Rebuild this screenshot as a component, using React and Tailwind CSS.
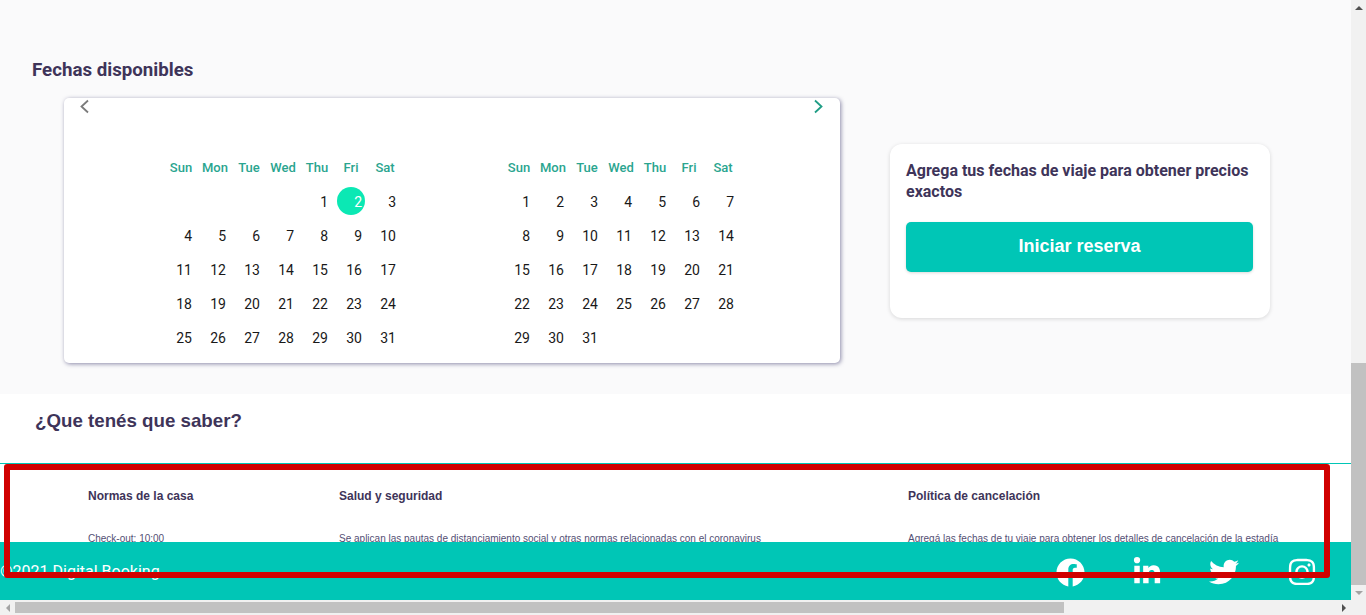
import React from 'react';
import { FaFacebook, FaLinkedinIn, FaTwitter, FaInstagram } from 'react-icons/fa';

const dayNames = ['Sun', 'Mon', 'Tue', 'Wed', 'Thu', 'Fri', 'Sat'];

const range = (from, to) => Array.from({ length: to - from + 1 }, (_, i) => from + i);

const Month = ({ blanks, total, selected }) => (
    <div className="grid grid-cols-[repeat(7,34px)] w-[238px]">
        {dayNames.map((name) => (
            <div key={name} className="h-[34px] flex items-center justify-center text-[13px] font-medium text-[#2aa58f]">
                {name}
            </div>
        ))}
        {range(1, blanks).map((n) => <div key={`b${n}`} className="h-[34px]" />)}
        {range(1, total).map((day) => (
            <div key={day} className="relative h-[34px] flex items-center justify-end pr-[6px] text-[14px] text-[#191919]">
                {day === selected && (
                    <span className="absolute left-[3px] top-[2px] w-[28px] h-[28px] rounded-full bg-[#0be8b4]" />
                )}
                <span className={day === selected ? 'relative text-white' : 'relative'}>{day}</span>
            </div>
        ))}
    </div>
);

const infoColumns = [
    { title: 'Normas de la casa', text: 'Check-out: 10:00', width: 'w-[251px]' },
    { title: 'Salud y seguridad', text: 'Se aplican las pautas de distanciamiento social y otras normas relacionadas con el coronavirus', width: 'w-[569px]' },
    { title: 'Política de cancelación', text: 'Agregá las fechas de tu viaje para obtener los detalles de cancelación de la estadía', width: 'w-[400px]' },
];

export default function App() {
    return (
        <div className="relative flex flex-col w-[1366px] h-[615px] overflow-hidden bg-white font-['Roboto',sans-serif]">
            <div className="flex h-[600px]">
                <main className="flex flex-col w-[1351px]">
                    {/* Fechas disponibles */}
                    <section className="h-[394px] bg-[#fafafb] pl-[32px] pt-[58px]">
                        <h2 className="text-[18.72px] leading-[24px] font-bold text-[#3e3459]">Fechas disponibles</h2>
                        <div className="flex mt-[16px] ml-[32px]">
                            <div className="w-[776px] h-[265px] bg-white rounded-[5px] shadow-[1px_1px_4px_rgba(50,45,100,0.55)] flex flex-col">
                                <div className="flex justify-between pl-[14px] pr-[15px] pt-[1px] h-[52px]">
                                    <svg width="13" height="15" viewBox="0 0 13 15" fill="none" stroke="#7b7b7b" strokeWidth="1.8">
                                        <path d="M10 1.5 L3.5 7.5 L10 13.5" />
                                    </svg>
                                    <svg width="13" height="15" viewBox="0 0 13 15" fill="none" stroke="#1f9d85" strokeWidth="1.8">
                                        <path d="M3 1.5 L9.5 7.5 L3 13.5" />
                                    </svg>
                                </div>
                                <div className="flex gap-[100px] pl-[100px] pt-[1px]">
                                    <Month blanks={4} total={31} selected={2} />
                                    <Month blanks={0} total={31} />
                                </div>
                            </div>
                            <div className="w-[380px] h-[174px] mt-[46px] ml-[50px] bg-white rounded-[12px] shadow-[0_1px_4px_rgba(0,0,0,0.14)] pl-[16px] pr-[17px] pt-[16px]">
                                <p className="text-[16px] leading-[21px] font-bold text-[#3e3459]">
                                    Agrega tus fechas de viaje para obtener precios exactos
                                </p>
                                <button className="w-full h-[50px] mt-[20px] pb-[2px] rounded-[5px] bg-[#00c6b6] text-white text-[18px] font-bold font-['Liberation_Sans',sans-serif] shadow-[0_1px_3px_rgba(0,0,0,0.15)]">
                                    Iniciar reserva
                                </button>
                            </div>
                        </div>
                    </section>

                    {/* Que tenes que saber */}
                    <section className="h-[69px] bg-white pl-[35px] pt-[15px]">
                        <h2 className="text-[18.72px] leading-[24px] font-bold text-[#3e3459] font-['Liberation_Sans',sans-serif]">¿Que tenés que saber?</h2>
                    </section>
                    <div className="h-px bg-[#00c6b6]" />
                    <section className="flex h-[78px] overflow-hidden bg-white pl-[88px] pt-[25px] font-['Liberation_Sans',sans-serif]">
                        {infoColumns.map((col) => (
                            <div key={col.title} className={col.width}>
                                <h3 className="text-[12px] leading-[15px] font-bold text-[#3e3459]">{col.title}</h3>
                                <p className="mt-[28px] text-[10px] leading-[13px] text-[#544f74]">{col.text}</p>
                            </div>
                        ))}
                    </section>

                    {/* Footer */}
                    <footer className="flex items-center justify-between h-[58px] pt-[2px] bg-[#00c6b6] text-white pr-[34px]">
                        <span className="text-[16px]">©2021 Digital Booking</span>
                        <div className="flex items-center">
                            <FaFacebook size={29} />
                            <FaLinkedinIn size={30} className="ml-[47px]" />
                            <FaTwitter size={30} className="ml-[47px]" />
                            <FaInstagram size={30} className="ml-[48px]" />
                        </div>
                    </footer>
                </main>

                {/* vertical scrollbar */}
                <div className="flex flex-col w-[15px] bg-[#f1f1f1]">
                    <div className="flex justify-center items-center h-[15px]">
                        <div className="w-0 h-0 border-l-[4px] border-r-[4px] border-b-[4px] border-l-transparent border-r-transparent border-b-[#505050]" />
                    </div>
                    <div className="mt-auto h-[222px] bg-[#c1c1c1]" />
                    <div className="flex justify-center items-center h-[15px]">
                        <div className="w-0 h-0 border-l-[4px] border-r-[4px] border-t-[4px] border-l-transparent border-r-transparent border-t-[#a3a3a3]" />
                    </div>
                </div>
            </div>

            {/* horizontal scrollbar */}
            <div className="flex items-center h-[15px] bg-[#f1f1f1]">
                <div className="flex justify-center w-[15px]">
                    <div className="w-0 h-0 border-t-[4px] border-b-[4px] border-r-[4px] border-t-transparent border-b-transparent border-r-[#a3a3a3]" />
                </div>
                <div className="w-[1049px] h-[11px] bg-[#c1c1c1]" />
                <div className="flex justify-center w-[15px] ml-auto mr-[15px]">
                    <div className="w-0 h-0 border-t-[4px] border-b-[4px] border-l-[4px] border-t-transparent border-b-transparent border-l-[#505050]" />
                </div>
            </div>

            {/* annotation drawn over the page */}
            <div className="absolute left-[4px] top-[464px] w-[1326px] h-[114px] border-[6px] border-[#d00000] rounded-[3px]" />
        </div>
    );
}
